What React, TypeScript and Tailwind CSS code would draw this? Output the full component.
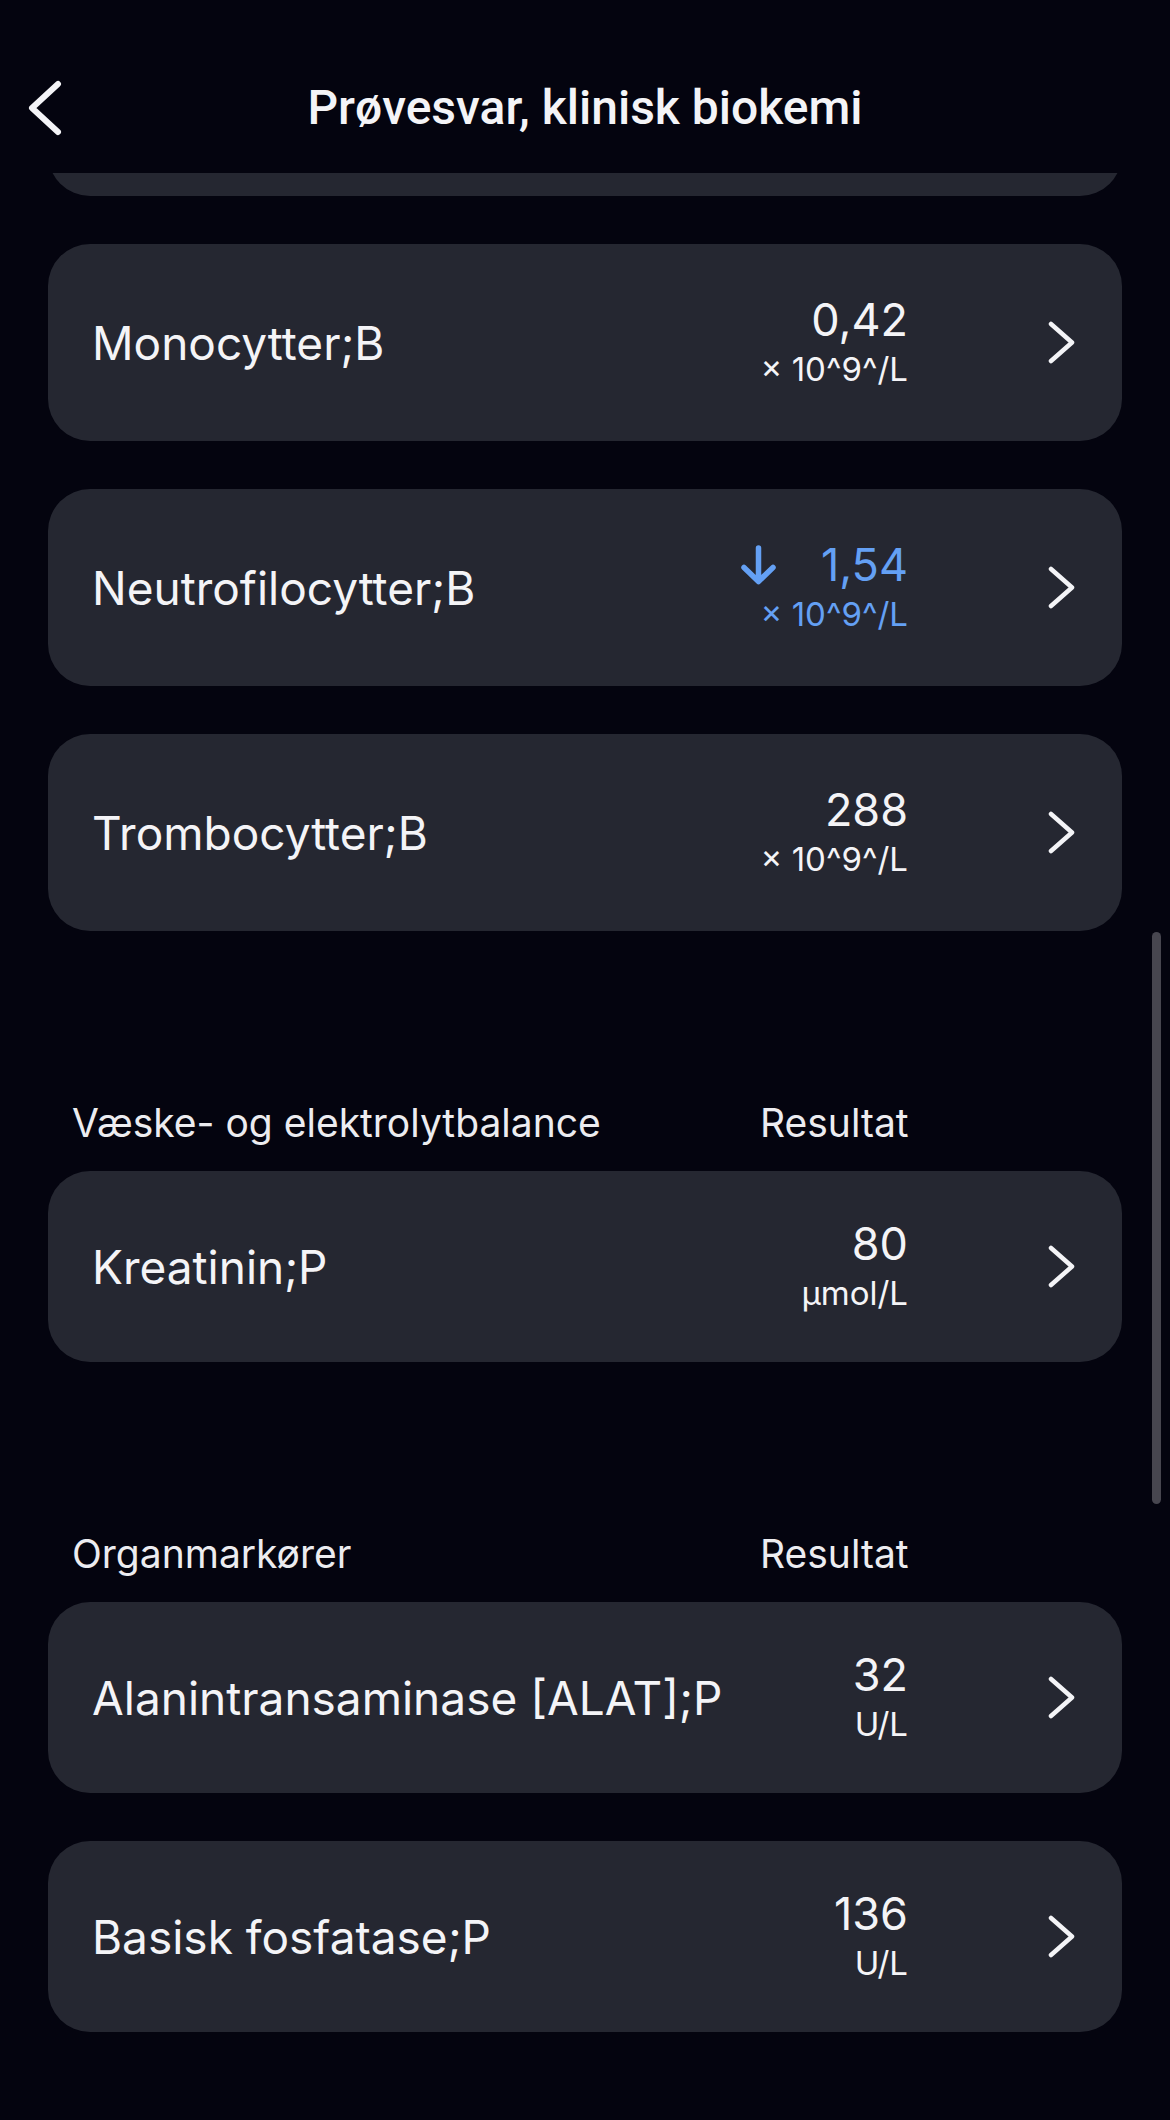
import type { ReactNode } from "react";

type Row = {
  name: string;
  value: string;
  unit: string;
  low?: boolean;
  tall?: boolean;
};

const blodRows: Row[] = [
  { name: "Monocytter;B", value: "0,42", unit: "× 10^9^/L", tall: true },
  { name: "Neutrofilocytter;B", value: "1,54", unit: "× 10^9^/L", low: true, tall: true },
  { name: "Trombocytter;B", value: "288", unit: "× 10^9^/L", tall: true },
];

const vaeskeRows: Row[] = [{ name: "Kreatinin;P", value: "80", unit: "µmol/L" }];

const organRows: Row[] = [
  { name: "Alanintransaminase [ALAT];P", value: "32", unit: "U/L" },
  { name: "Basisk fosfatase;P", value: "136", unit: "U/L" },
];

const Chevron = () => (
  <svg width="27" height="43" viewBox="0 0 27 43" fill="none" className="shrink-0">
    <polyline
      points="3,3 24,21.5 3,40"
      stroke="#f4f4f7"
      strokeWidth="4.5"
      strokeLinecap="round"
      strokeLinejoin="round"
    />
  </svg>
);

const ArrowDown = () => (
  <svg width="37" height="40" viewBox="0 0 37 40" fill="none" className="shrink-0">
    <path
      d="M18.5 3 V36 M4 22.5 L18.5 36.5 L33 22.5"
      stroke="#64a0f4"
      strokeWidth="5.5"
      strokeLinecap="round"
      strokeLinejoin="round"
    />
  </svg>
);

const ResultCard = ({ row }: { row: Row }) => {
  const color = row.low ? "text-[#64a0f4]" : "text-[#f4f4f7]";
  return (
    <div
      className={`flex items-center mx-[48px] pl-[44px] pr-[47px] rounded-[42px] bg-[#252731] ${
        row.tall ? "h-[197px]" : "h-[191px]"
      }`}
    >
      <div className="flex-1 text-[46px] leading-[56px] text-[#f4f4f7]">{row.name}</div>
      <div className={`flex flex-col items-end pt-[4px] ${color}`}>
        <div className="flex items-center gap-[44px]">
          {row.low && <ArrowDown />}
          <span className="text-[45px] leading-[48px]">{row.value}</span>
        </div>
        <span className="text-[33px] leading-[50px]">{row.unit}</span>
      </div>
      <div className="ml-[140px]">
        <Chevron />
      </div>
    </div>
  );
};

const SectionHead = ({ title }: { title: string }) => (
  <div className="flex items-center mt-[170px] mb-[26px] h-[44px] pl-[72px] text-[39px] leading-[44px] text-[#ececf0]">
    <span className="w-[688px]">{title}</span>
    <span className="w-[148px] text-right">Resultat</span>
  </div>
);

const Group = ({ children }: { children: ReactNode }) => (
  <div className="flex flex-col gap-[48px]">{children}</div>
);

export default function App() {
  return (
    <div
      className="relative w-[1170px] h-[2120px] overflow-hidden bg-[#04040f]"
      style={{ fontFamily: "Inter, 'Noto Sans', sans-serif" }}
    >
      <header className="h-[173px] pt-[80px]">
        <div className="grid grid-cols-[1fr_auto_1fr] items-center h-[56px]">
          <div className="pl-[28px]">
            <svg width="34" height="56" viewBox="0 0 34 56" fill="none">
              <polyline
                points="30,4 4,28 30,52"
                stroke="#f4f4f7"
                strokeWidth="6"
                strokeLinecap="round"
                strokeLinejoin="round"
              />
            </svg>
          </div>
          <h1
            className="text-[48px] font-medium text-[#f4f4f7] leading-[56px]"
            style={{ fontFamily: "Roboto, 'Noto Sans', sans-serif" }}
          >
            Prøvesvar, klinisk biokemi
          </h1>
          <div />
        </div>
      </header>

      <main className="h-[1947px] overflow-hidden">
        <div className="-mt-[174px] h-[197px] mx-[48px] rounded-[42px] bg-[#252731]" />
        <div className="mt-[48px]">
          <Group>
            {blodRows.map((r) => (
              <ResultCard key={r.name} row={r} />
            ))}
          </Group>
        </div>

        <SectionHead title="Væske- og elektrolytbalance" />
        <Group>
          {vaeskeRows.map((r) => (
            <ResultCard key={r.name} row={r} />
          ))}
        </Group>

        <SectionHead title="Organmarkører" />
        <Group>
          {organRows.map((r) => (
            <ResultCard key={r.name} row={r} />
          ))}
        </Group>
      </main>

      <div className="absolute left-[1152px] top-[932px] w-[9px] h-[572px] rounded-full bg-[#47464f]" />
    </div>
  );
}
